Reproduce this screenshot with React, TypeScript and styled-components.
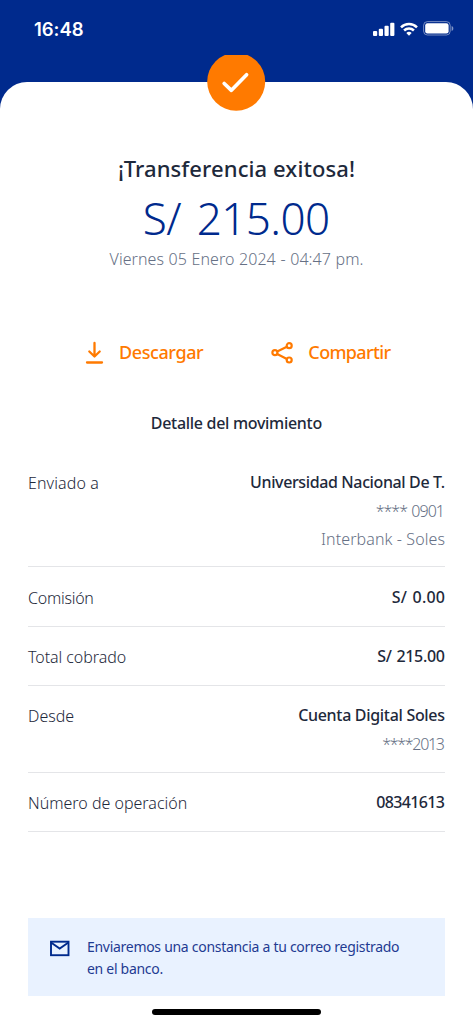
import React from 'react';
import styled, { createGlobalStyle } from 'styled-components';

const GlobalStyle = createGlobalStyle`
  * { box-sizing: border-box; }
  body { margin: 0; background: #fff; }
`;

const navy = '#002a8d';
const orange = '#ff7a00';
const ink = '#1e293b';
const muted = '#667085';

const Screen = styled.div`
  width: 473px;
  height: 1024px;
  display: flex;
  flex-direction: column;
  overflow: hidden;
  background: ${navy};
  font-family: 'Noto Sans', sans-serif;
  color: ${ink};
`;

const StatusBar = styled.header`
  flex: none;
  height: 82px;
  padding: 17px 19px 0 34px;
  display: flex;
  justify-content: space-between;
  align-items: flex-start;
`;

const Clock = styled.span`
  font: 600 18.5px/24px Inter, sans-serif;
  letter-spacing: -0.05px;
  color: #fff;
`;

const Indicators = styled.div`
  display: flex;
  align-items: center;
  gap: 5px;
  padding-top: 4px;
`;

const Sheet = styled.main`
  position: relative;
  flex: 1;
  display: flex;
  flex-direction: column;
  align-items: center;
  padding: 70px 28px 0;
  border-radius: 27px 27px 0 0;
  background: #fff;
`;

const Badge = styled.div`
  position: absolute;
  top: -27px;
  left: 207px;
  height: 56px;
`;

const Line = styled.span<{
  $size: number;
  $height: number;
  $weight?: number;
  $spacing?: number;
  $gap?: number;
  $color?: string;
}>`
  display: block;
  white-space: nowrap;
  font-size: ${p => p.$size}px;
  line-height: ${p => p.$height}px;
  font-weight: ${p => p.$weight ?? 400};
  letter-spacing: ${p => p.$spacing ?? 0}px;
  word-spacing: ${p => p.$gap ?? 0}px;
  margin-right: ${p => -(p.$spacing ?? 0)}px;
  color: ${p => p.$color ?? ink};
`;

const Summary = styled.section`
  height: 124px;
  display: flex;
  flex-direction: column;
  align-items: center;
`;

const Amount = styled.div`
  padding-top: 4px;
  height: 60px;
`;

const Actions = styled.nav`
  align-self: stretch;
  display: flex;
  justify-content: space-between;
  margin-top: 62px;
  padding: 0 54px 0 56px;
`;

const Action = styled.button`
  display: flex;
  align-items: center;
  gap: 14px;
  height: 28px;
  padding: 0;
  border: 0;
  background: none;
  font-family: inherit;
`;

const SectionTitle = styled.h2`
  margin: 44px 0 17px;
  font-weight: inherit;
`;

const Details = styled.dl`
  align-self: stretch;
  margin: 0;
`;

const Row = styled.div`
  display: flex;
  justify-content: space-between;
  align-items: flex-start;
  padding: 16.1px 0 14.6px;
  border-bottom: 1px solid #e4e5e8;
`;

const Label = styled.dt`
  padding-top: 1.2px;
  height: 27.6px;
`;

const Values = styled.dd`
  margin: 0;
  display: flex;
  flex-direction: column;
  align-items: flex-end;
`;

const Notes = styled.div`
  display: flex;
  flex-direction: column;
  align-items: flex-end;
  padding-top: 1.5px;
  margin-bottom: -1.5px;
`;

const Notice = styled.aside`
  align-self: stretch;
  display: flex;
  gap: 17px;
  height: 78px;
  margin-top: 86px;
  padding: 18px 21px;
  background: #e9f2ff;
`;

const NoticeText = styled.div`
  flex: 1;
`;

const HomeBar = styled.div`
  width: 169px;
  height: 6px;
  margin-top: 13px;
  border-radius: 3px;
  background: #000;
`;

type Text = { text: string; spacing?: number; gap?: number };
const rows: { label: Text; value: Text; notes?: Text[] }[] = [
  {
    label: { text: 'Enviado a', spacing: 0.1 },
    value: { text: 'Universidad Nacional De T.', spacing: -0.38 },
    notes: [{ text: '**** 0901', spacing: -0.95, gap: 1 }, { text: 'Interbank - Soles', spacing: 0.1 }],
  },
  { label: { text: 'Comisión', spacing: -0.25 }, value: { text: 'S/ 0.00', spacing: 0.2, gap: 1 } },
  { label: { text: 'Total cobrado', spacing: -0.07 }, value: { text: 'S/ 215.00', spacing: -0.3, gap: 1 } },
  {
    label: { text: 'Desde', spacing: 0 },
    value: { text: 'Cuenta Digital Soles', spacing: -0.31 },
    notes: [{ text: '****2013', spacing: -1.3 }],
  },
  { label: { text: 'Número de operación', spacing: 0 }, value: { text: '08341613', spacing: -0.65 } },
];

export default function App() {
  return (
    <Screen>
      <GlobalStyle />
      <StatusBar>
        <Clock>16:48</Clock>
        <Indicators>
          <svg width="22" height="14" viewBox="0 0 22 14" fill="#fff">
            <rect x="0" y="9" width="4.2" height="5" rx="1" />
            <rect x="5.8" y="6.8" width="4.2" height="7.2" rx="1" />
            <rect x="11.5" y="3.8" width="4.2" height="10.2" rx="1" />
            <rect x="17.2" y="0.8" width="4.2" height="13.2" rx="1" />
          </svg>
          <svg width="18" height="14" viewBox="0 0 18 14" fill="none" stroke="#fff" strokeWidth="2.5">
            <path d="M1 5.3a11.5 11.5 0 0 1 16 0" />
            <path d="M4.1 8.5a7 7 0 0 1 9.8 0" />
            <path d="M6.3 11.1a3.9 3.9 0 0 1 5.4 0L9 13.8z" fill="#fff" stroke="none" />
          </svg>
          <svg width="31" height="15" viewBox="0 0 31 15">
            <rect x="0.6" y="0.6" width="26.6" height="13.4" rx="3.8" fill="none" stroke="#fff" strokeOpacity=".45" />
            <rect x="2.2" y="2.2" width="23.4" height="10.2" rx="2.2" fill="#fff" />
            <path d="M28.6 5v5c1.4-.5 1.7-1.5 1.7-2.5S30 5.5 28.6 5z" fill="#fff" fillOpacity=".5" />
          </svg>
        </Indicators>
      </StatusBar>
      <Sheet>
        <Badge>
          <svg width="59" height="56" viewBox="0 0 59 56">
            <circle cx="29.2" cy="26.7" r="29" fill={orange} />
            <path d="M17.2 28.5l7.2 6.8 15.2-15.5" fill="none" stroke="#fff" strokeWidth="3.7" strokeLinecap="round" strokeLinejoin="round" />
          </svg>
        </Badge>
        <Summary>
          <Line $size={22} $height={32} $weight={500} $spacing={0.1}>¡Transferencia exitosa!</Line>
          <Amount>
            <Line $size={44} $height={60} $weight={350} $spacing={-0.6} $gap={5} $color={navy}>S/ 215.00</Line>
          </Amount>
          <Line $size={16} $height={30} $weight={300} $spacing={0.05} $gap={0.4} $color={muted}>Viernes 05 Enero 2024 - 04:47 pm.</Line>
        </Summary>
        <Actions>
          <Action>
            <svg width="21" height="24" viewBox="0 0 21 24" fill="none" stroke={orange} strokeWidth="2.3" strokeLinecap="round" strokeLinejoin="round">
              <path d="M10.5 3v13M5.3 11.5l5.2 5 5.2-5M3 22.5h15" />
            </svg>
            <Line $size={18} $height={28} $weight={500} $spacing={-0.4} $color={orange}>Descargar</Line>
          </Action>
          <Action>
            <svg width="23" height="24" viewBox="0 0 23 24" fill="none" stroke={orange} strokeWidth="2.2">
              <circle cx="3.9" cy="12.7" r="2.5" />
              <circle cx="18.2" cy="5.7" r="2.5" />
              <circle cx="18.2" cy="20" r="2.5" />
              <path d="M6.2 11.6l9.7-4.8M6.2 13.9l9.7 5" />
            </svg>
            <Line $size={18} $height={28} $weight={500} $spacing={-0.66} $color={orange}>Compartir</Line>
          </Action>
        </Actions>
        <SectionTitle>
          <Line $size={16} $height={26} $weight={500} $spacing={-0.3}>Detalle del movimiento</Line>
        </SectionTitle>
        <Details>
          {rows.map(r => (
            <Row key={r.label.text}>
              <Label>
                <Line $size={16} $height={27.6} $weight={350} $spacing={r.label.spacing}>{r.label.text}</Line>
              </Label>
              <Values>
                <Line $size={16} $height={27.6} $weight={550} $spacing={r.value.spacing} $gap={r.value.gap}>{r.value.text}</Line>
                {r.notes && (
                  <Notes>
                    {r.notes.map(n => (
                      <Line key={n.text} $size={16} $height={27.6} $weight={300} $color={muted} $spacing={n.spacing} $gap={n.gap}>{n.text}</Line>
                    ))}
                  </Notes>
                )}
              </Values>
            </Row>
          ))}
        </Details>
        <Notice>
          <svg width="21" height="26" viewBox="0 0 21 26" fill="none" stroke={navy} strokeWidth="1.9">
            <rect x="2" y="5.7" width="17.5" height="13.5" />
            <path d="M2 6.5l8.7 6 8.7-6" />
          </svg>
          <NoticeText>
            <Line $size={14} $height={22} $weight={370} $spacing={-0.29} $color="#1f3b92">Enviaremos una constancia a tu correo registrado</Line>
            <Line $size={14} $height={22} $weight={370} $spacing={-0.29} $color="#1f3b92">en el banco.</Line>
          </NoticeText>
        </Notice>
        <HomeBar />
      </Sheet>
    </Screen>
  );
}
